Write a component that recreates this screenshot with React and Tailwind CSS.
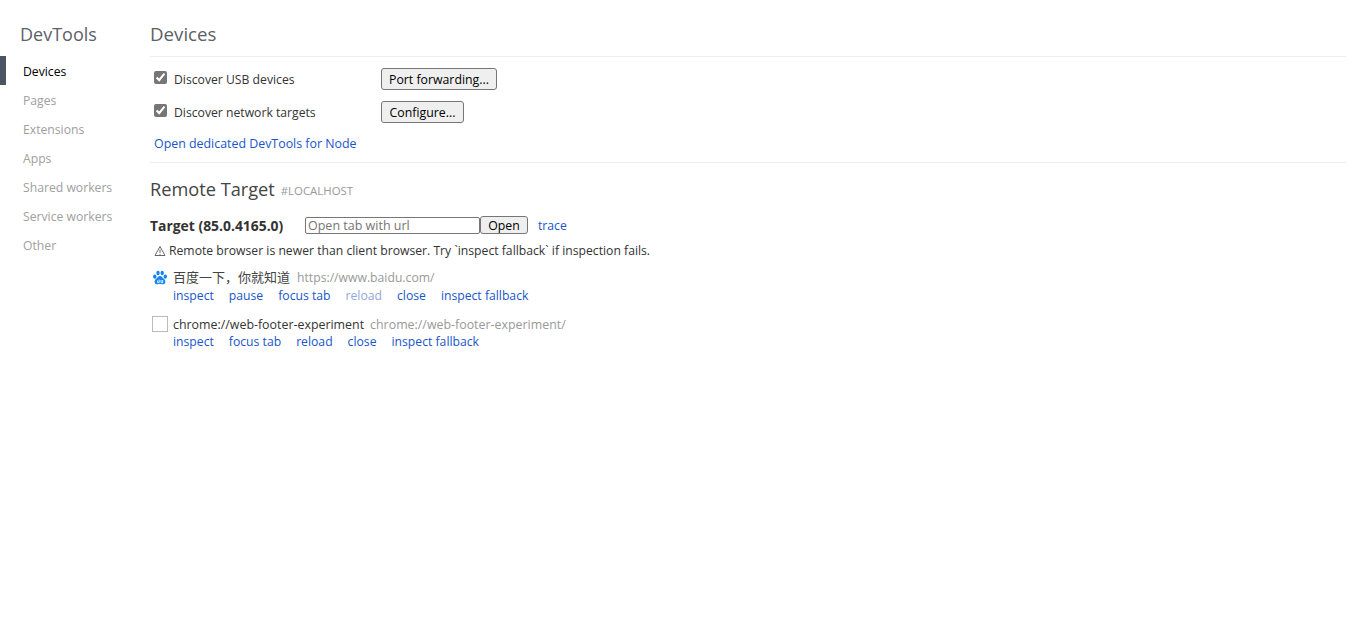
import React from "react";

function Nav({ label, active }) {
  return (
    <div className={`h-[29px] flex items-center pl-[17px] pt-[3px] border-l-[6px] ${active ? "border-[#4a5462] text-[#000000]" : "border-transparent text-[#a0a0a0]"}`}>
      {label}
    </div>
  );
}

function Check({ label, children }) {
  return (
    <div className="h-[33px] flex items-center pl-[4px]">
      <input type="checkbox" defaultChecked readOnly className="w-[13px] h-[13px] m-0 accent-[#767676] -mt-[2px]" />
      <span className="ml-[7px] w-[207px] pt-[3px] text-[#333333]">{label}</span>
      {children}
    </div>
  );
}

function Btn({ children, className = "" }) {
  return (
    <button className={`border border-[#767676] rounded-[3px] bg-[#efefef] text-[12.3px] text-[#000000] ${className}`}>
      {children}
    </button>
  );
}

function Actions({ items }) {
  return (
    <div className="flex gap-[15px] pl-[23px] pt-[4px] h-[17px] items-center">
      {items.map(([t, off]) => (
        <span key={t} className={off ? "text-[#8fa9dc]" : "text-[#1a55c9]"}>{t}</span>
      ))}
    </div>
  );
}

function Baidu() {
  return (
    <svg viewBox="0 0 16 16" className="w-[16px] h-[16px]" fill="#1484f0">
      <ellipse cx="2.800" cy="6.600" rx="1.700" ry="2.200" />
      <ellipse cx="6" cy="3" rx="1.700" ry="2.200" />
      <ellipse cx="10.200" cy="3" rx="1.700" ry="2.200" />
      <ellipse cx="13.300" cy="6.600" rx="1.700" ry="2.200" />
      <path d="M8 6c-1.700 0-2.400 1.500-3.500 2.500C3.200 9.600 2.300 10.800 2.700 12.500c.4 1.500 1.700 2 3 1.800.9-.1 1.600-.3 2.300-.3s1.400.2 2.300.3c1.300.2 2.600-.3 3-1.800.4-1.700-.5-2.900-1.800-4C10.400 7.500 9.700 6 8 6z" />
      <path d="M5.600 10.400v2.200h1.600v-3M9 10v2.200c0 .4.300.5.700.5h1V10" fill="none" stroke="#ffffff" strokeWidth=".9" />
    </svg>
  );
}

export default function App() {
  return (
    <div className="min-h-[635px] bg-white flex text-[12.2px] font-['Open_Sans','Noto_Sans_CJK_SC',sans-serif]">
      <aside className="w-[150px] shrink-0">
        <div className="h-[56px] pl-[20px] flex items-center pt-[12px] text-[18px] text-[#5c6166]">DevTools</div>
        <Nav label="Devices" active />
        <Nav label="Pages" />
        <Nav label="Extensions" />
        <Nav label="Apps" />
        <Nav label="Shared workers" />
        <Nav label="Service workers" />
        <Nav label="Other" />
      </aside>
      <main className="w-[1196px]">
        <div className="h-[57px] pt-[12px] flex items-center text-[18.700px] text-[#5c6166] border-b border-[#eeeeee]">Devices</div>
        <div className="pt-[5px]">
          <Check label="Discover USB devices"><Btn className="w-[116px] h-[22px] pt-[2px]">Port forwarding...</Btn></Check>
          <Check label="Discover network targets"><Btn className="w-[83px] h-[22px] pt-[2px]">Configure...</Btn></Check>
          <div className="h-[29px] pl-[4px] pt-[4px] flex items-center text-[12.400px] text-[#1a55c9]">Open dedicated DevTools for Node</div>
        </div>
        <div className="border-t border-[#eeeeee] mt-[5px]" />
        <div className="h-[53px] flex items-center">
          <span className="text-[18.200px] text-[#444444]">Remote Target</span>
          <span className="ml-[6px] text-[11.400px] text-[#999999] mt-[3px]">#LOCALHOST</span>
        </div>
        <div className="h-[18px] flex items-center">
          <span className="w-[155px] pt-[2px] text-[13.900px] font-bold text-[#333333] whitespace-nowrap">Target (85.0.4165.0)</span>
          <input placeholder="Open tab with url" className="w-[175px] h-[17px] px-[2px] pt-[2px] mt-[1px] border border-[#767676] rounded-[2px] outline-none text-[12.500px] placeholder:text-[#757575]" />
          <Btn className="h-[18px] w-[48px]">Open</Btn>
          <span className="ml-[10px] pt-[2px] text-[#1a55c9]">trace</span>
        </div>
        <div className="h-[32px] pl-[4px] pt-[2px] flex items-center text-[#333333]">
          <svg viewBox="0 0 12 12" className="w-[12px] h-[12px] mr-[3px]" fill="none" stroke="#666666" strokeWidth="1">
            <path d="M6 1.500 11 10.500H1z" />
            <path d="M6 4.500V8M6 8.800v1" />
          </svg>
          Remote browser is newer than client browser. Try `inspect fallback` if inspection fails.
        </div>
        <div className="h-[17px] mt-[3px] flex items-center pl-[2px]">
          <span className="w-[21px] flex items-center"><Baidu /></span>
          <span className="pt-[1px] text-[13px] text-[#444444]">百度一下，你就知道</span>
          <span className="ml-[7px] pt-[2px] text-[#999999]">https://www.baidu.com/</span>
        </div>
        <Actions items={[["inspect"], ["pause"], ["focus tab"], ["reload", true], ["close"], ["inspect fallback"]]} />
        <div className="h-[17px] mt-[12px] flex items-center pl-[2px]">
          <span className="w-[21px]"><span className="block w-[16px] h-[16px] border border-[#bbbbbb]" /></span>
          <span className="pt-[4px] text-[12.400px] text-[#333333]">chrome://web-footer-experiment</span>
          <span className="ml-[6px] pt-[4px] text-[12.400px] text-[#999999]">chrome://web-footer-experiment/</span>
        </div>
        <Actions items={[["inspect"], ["focus tab"], ["reload"], ["close"], ["inspect fallback"]]} />
      </main>
    </div>
  );
}
